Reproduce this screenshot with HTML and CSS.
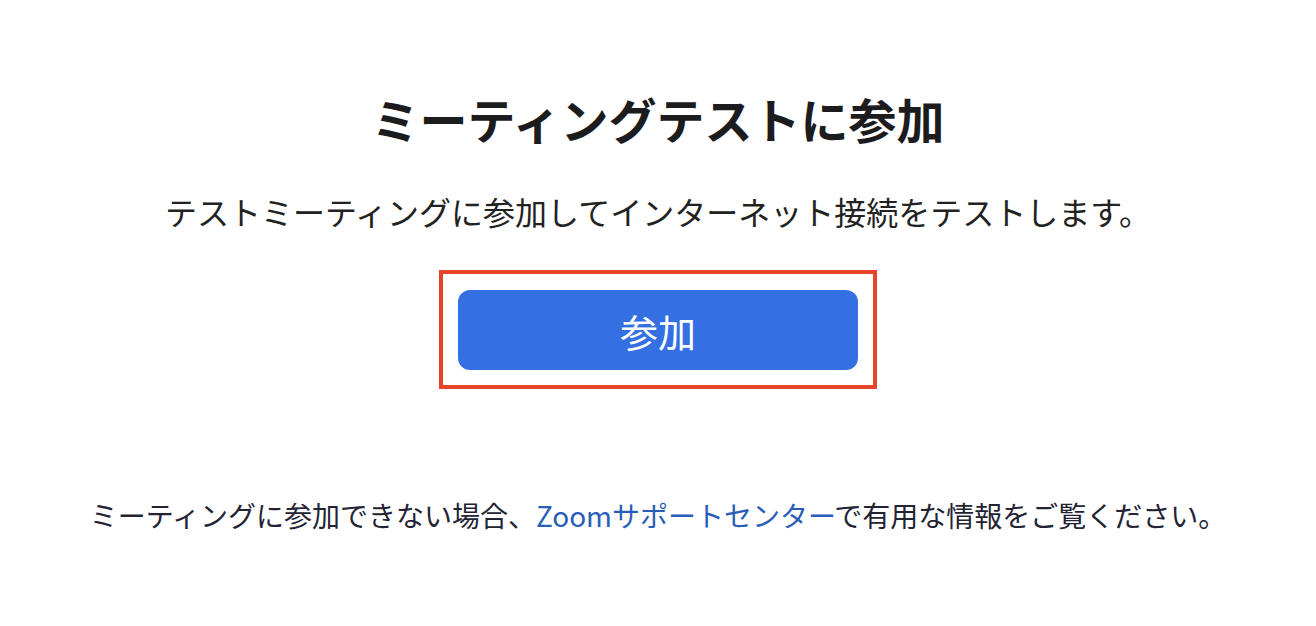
FILE: index.html
```html
<!DOCTYPE html>
<html lang="ja">
<head>
    <meta charset="UTF-8">
    <meta name="viewport" content="width=device-width, initial-scale=1.0">
    <title>ミーティングテストに参加</title>
    <link rel="stylesheet" href="styles.css">
</head>
<body>
    <div class="page">
        <h1 class="title">ミーティングテストに参加</h1>
        <p class="lead">テストミーティングに参加してインターネット接続をテストします。</p>

        <!-- Join button, highlighted -->
        <div class="highlight">
            <button class="join-button">参加</button>
        </div>

        <p class="help">ミーティングに参加できない場合、<a href="#" class="help-link">Zoomサポートセンター</a>で有用な情報をご覧ください。</p>
    </div>
</body>
</html>
```

FILE: styles.css
```css
* {
    margin: 0;
    padding: 0;
    box-sizing: border-box;
}

body {
    font-family: "Noto Sans CJK JP", "Noto Sans", sans-serif;
    background: #fff;
    color: #222;
}

.page {
    display: flex;
    flex-direction: column;
    align-items: center;
    padding-top: 89px;
}

.title {
    font-size: 48px;
    line-height: 58px;
    font-weight: 700;
    color: #1c1c1e;
}

.lead {
    margin-top: 44px;
    font-size: 32px;
    line-height: 40px;
    color: #222;
}

.highlight {
    margin-top: 39px;
    border: 4px solid #e8442a;
    padding: 16px 15px 15px;
}

.join-button {
    display: block;
    width: 400px;
    height: 80px;
    border: none;
    border-radius: 12px;
    background-color: #3470e2;
    color: #fff;
    font-family: inherit;
    font-size: 38px;
    cursor: pointer;
}

.help {
    margin-top: 106px;
    font-size: 28px;
    line-height: 40px;
    color: #232333;
}

.help-link {
    color: #2a5db8;
    text-decoration: none;
}
```
